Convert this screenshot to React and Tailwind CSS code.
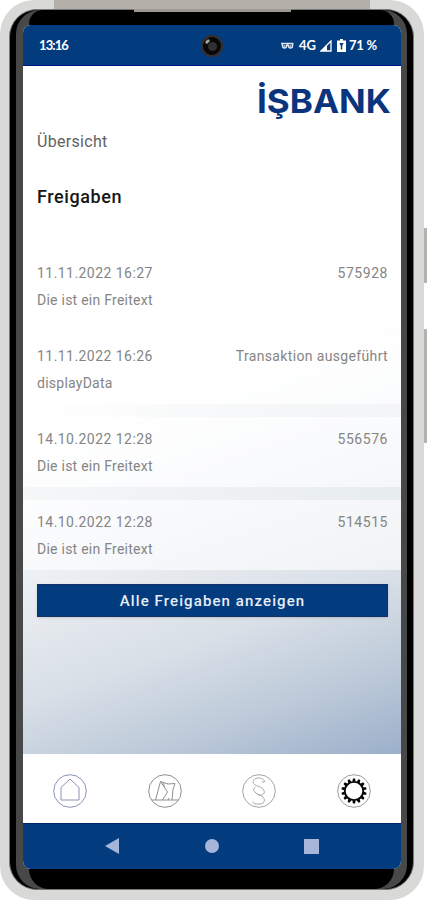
const APPROVALS = [
  { id: 1, date: "11.11.2022 16:27", code: "575928", text: "Die ist ein Freitext", gap: "bg-transparent" },
  { id: 2, date: "11.11.2022 16:26", code: "Transaktion ausgeführt", text: "displayData", gap: "bg-transparent" },
  { id: 3, date: "14.10.2022 12:28", code: "556576", text: "Die ist ein Freitext", gap: "bg-gradient-to-r from-transparent to-[#f3f5f6]" },
  { id: 4, date: "14.10.2022 12:28", code: "514515", text: "Die ist ein Freitext", gap: "bg-gradient-to-r from-[#f5f7f9] to-[#e7ecef]" },
];

const GEAR_TEETH = Array.from({ length: 14 }, (_, i) => (i * 360) / 14);

export default function App() {
  return (
    <div className="relative h-[900px] w-[427px] overflow-hidden bg-white font-['Roboto',sans-serif]">
      <SideButtons />
      <div className="relative h-[900px] w-[424px] overflow-hidden rounded-[34px] bg-[#d9d9d7] pt-[9px] pl-[9px]">
        <TopEdge />
        <div className="relative h-[881px] w-[405px] overflow-hidden rounded-[28px] border border-[#777] bg-black px-[6px]">
          <div className="flex h-full flex-col overflow-hidden rounded-[24px] bg-[#484848]">
            <div className="mx-[13px] h-[15px] shrink-0 rounded-t-[14px] bg-black" />
            <div className="mr-[6px] ml-[7px] flex h-[844px] shrink-0 flex-col overflow-hidden rounded-[8px] bg-white">
              <StatusBar />
              <Content />
              <TabBar />
              <SystemNav />
            </div>
            <div className="mx-[13px] flex-1 rounded-b-[20px] bg-black" />
          </div>
        </div>
      </div>
    </div>
  );
}

// ── Device ───────────────────────────────

function SideButtons() {
  return (
    <>
      <div className="absolute top-[228px] right-0 h-[55px] w-[10px] bg-[#b2b2b0]" />
      <div className="absolute top-[329px] right-0 h-[114px] w-[10px] bg-[#b2b2b0]" />
    </>
  );
}

function TopEdge() {
  return (
    <>
      <div className="absolute top-0 left-[54px] h-[10px] w-[316px] bg-[#b4afa9]" />
      <div className="absolute top-[9px] left-[134px] z-10 h-[3px] w-[157px] bg-[#9c9894]" />
    </>
  );
}

function StatusBar() {
  return (
    <div className="relative flex h-[41px] shrink-0 items-center justify-between border-b border-[#00158a] bg-[#023c7f] pt-[1px] pr-[24px] pl-[16px] font-['Lato',sans-serif] text-[13px] font-bold text-white">
      <span className="text-[13px] tracking-[-0.9px]">13:16</span>
      <div className="absolute top-[10px] left-[178px] size-[22px] rounded-full border-2 border-[#352f2b] bg-[#080808]">
        <div className="mt-[5px] ml-[5px] size-[9px] rounded-full bg-[#303030]" />
        <div className="absolute top-[2px] left-[3px] h-[5px] w-[3px] rotate-45 rounded-full bg-[#a9a39d]" />
      </div>
      <div className="flex items-center">
        <svg viewBox="0 0 13 8" className="mr-[5px] h-[8px] w-[13px]" fill="none" stroke="#dbe3f2" strokeWidth="1.5">
          <path d="M0 1.500h12.500M1.500 2v2a2 2 0 0 0 4 0L7.500 2.500M3 3.500l1 1M5 4l2.500-1.500M7.500 3v1a2 2 0 0 0 4 0V2M9 3.500l1 1" />
        </svg>
        <span className="mr-[4px]">4G</span>
        <svg viewBox="0 0 12 12" className="mr-[5px] size-[12px]" fill="none" stroke="white" strokeWidth="1.300">
          <path d="M1 11 11 1v10z" />
          <path d="M1 11 7 5v6z" fill="white" stroke="none" />
        </svg>
        <svg viewBox="0 0 9 13" className="mr-[3px] h-[13px] w-[9px]">
          <path d="M3 0h3v1.500h3V13H0V1.500h3z" fill="white" />
          <path d="M2.500 4h4L5.200 7v3.500H3.800V7z" fill="#023c7f" />
        </svg>
        <span className="tracking-[-0.2px]">71 %</span>
      </div>
    </div>
  );
}

// ── Screen ───────────────────────────────

function Content() {
  return (
    <div className="flex h-[688px] shrink-0 flex-col bg-[linear-gradient(161deg,#fff_0%,#fff_46%,#f7f9fb_54%,#e5e9ee_69%,#d8dfe7_78%,#bdcad9_89%,#9cb0ca_100%)]">
      <div className="flex h-[62px] justify-end pt-[9px] pr-[9px]">
        <Logo />
      </div>
      <div className="px-[14px]">
        <div className="h-[28px] text-[16px] leading-[28px] tracking-[0.3px] text-[#616161]">Übersicht</div>
        <h1 className="mt-[27px] h-[28px] text-[18px] leading-[28px] font-medium tracking-[0.6px] text-[#161616]">Freigaben</h1>
      </div>
      <div className="mt-[27px]">
        {APPROVALS.map((a) => (
          <ApprovalRow key={a.id} approval={a} />
        ))}
      </div>
      <div className="pt-[14px] pr-[13px] pl-[14px]">
        <button className="h-[33px] w-full border border-[#123267] bg-[#023c7f] pt-[1px] text-[15px] font-medium tracking-[1.1px] text-[#e7edf8] shadow-sm">
          Alle Freigaben anzeigen
        </button>
      </div>
    </div>
  );
}

function Logo() {
  return (
    <svg viewBox="0 0 136 46" className="h-[46px] w-[136px]" aria-label="İŞBANK">
      <text
        x="1"
        y="38"
        textLength="134"
        lengthAdjust="spacingAndGlyphs"
        fill="#0b347e"
        fontFamily="Inter, sans-serif"
        fontWeight="700"
        fontSize="33"
      >
        İŞBANK
      </text>
    </svg>
  );
}

function ApprovalRow({ approval }) {
  return (
    <div>
      <div className={`h-[13px] ${approval.gap}`} />
      <div className="h-[70px] bg-white/60 pt-[9px] pr-[13px] pl-[14px] text-[#858585]">
        <div className="flex h-[27px] justify-between text-[14px] leading-[27px]">
          <span className="tracking-[0.45px]">{approval.date}</span>
          <span className={/^\d+$/.test(approval.code) ? "tracking-[0.55px]" : "tracking-[0.35px]"}>{approval.code}</span>
        </div>
        <div className="h-[27px] text-[14px] leading-[27px] tracking-[0.25px]">{approval.text}</div>
      </div>
    </div>
  );
}

// ── Navigation ───────────────────────────────

function TabBar() {
  return (
    <div className="flex h-[69px] shrink-0 items-center justify-between bg-white px-[30px] pt-[5px]">
      <TabIcon color="#8b92b4">
        <path d="M8 26V13.500l9-8.500 9 8.500V26z" />
      </TabIcon>
      <TabIcon color="#909090">
        <path d="M3.500 26h27M7.500 26 12.500 7.500 19.500 18 14.500 26M12.500 7.500 20 10l7-.5-2 6L24 26M15 8.500l1.500 4M20 26l1-2" />
      </TabIcon>
      <TabIcon color="#a5a5a5">
        <path d="M22.500 8c0-3-3-4-6-4-5 0-7 4-4 6.500 2 1.500 6 2 8 4s2.500 4 1 5.500c-2 2-5 1-7-.5-3-2-4-5-1-6.500M13 18c2 3 6 3 8 5s2 6-2 7h-5c-2 0-3-1-3-2.500M20 8l2 0" />
      </TabIcon>
      <TabIcon color="#9b9b9b">
        <circle cx="17" cy="17" r="9.200" stroke="#050505" strokeWidth="1.800" />
        {GEAR_TEETH.map((angle) => (
          <path key={angle} d="M15.300 7.500 16 4.400h2l.7 3.100z" fill="#050505" stroke="none" transform={`rotate(${angle} 17 17)`} />
        ))}
      </TabIcon>
    </div>
  );
}

function TabIcon({ color, children }) {
  return (
    <svg viewBox="0 0 34 34" className="size-[34px]" fill="none" stroke={color} strokeWidth="1">
      <circle cx="17" cy="17" r="16.300" />
      {children}
    </svg>
  );
}

function SystemNav() {
  return (
    <div className="flex h-[46px] shrink-0 items-center justify-between border-t border-[#00286f] bg-[#023c7f] px-[82px] pb-[1px]">
      <svg viewBox="0 0 15 16" className="h-[16px] w-[15px]" fill="#a5b6da">
        <path d="M0 8 14 0v16z" />
      </svg>
      <div className="size-[14px] rounded-full bg-[#a5b6da]" />
      <div className="size-[15px] bg-[#a5b6da]" />
    </div>
  );
}
